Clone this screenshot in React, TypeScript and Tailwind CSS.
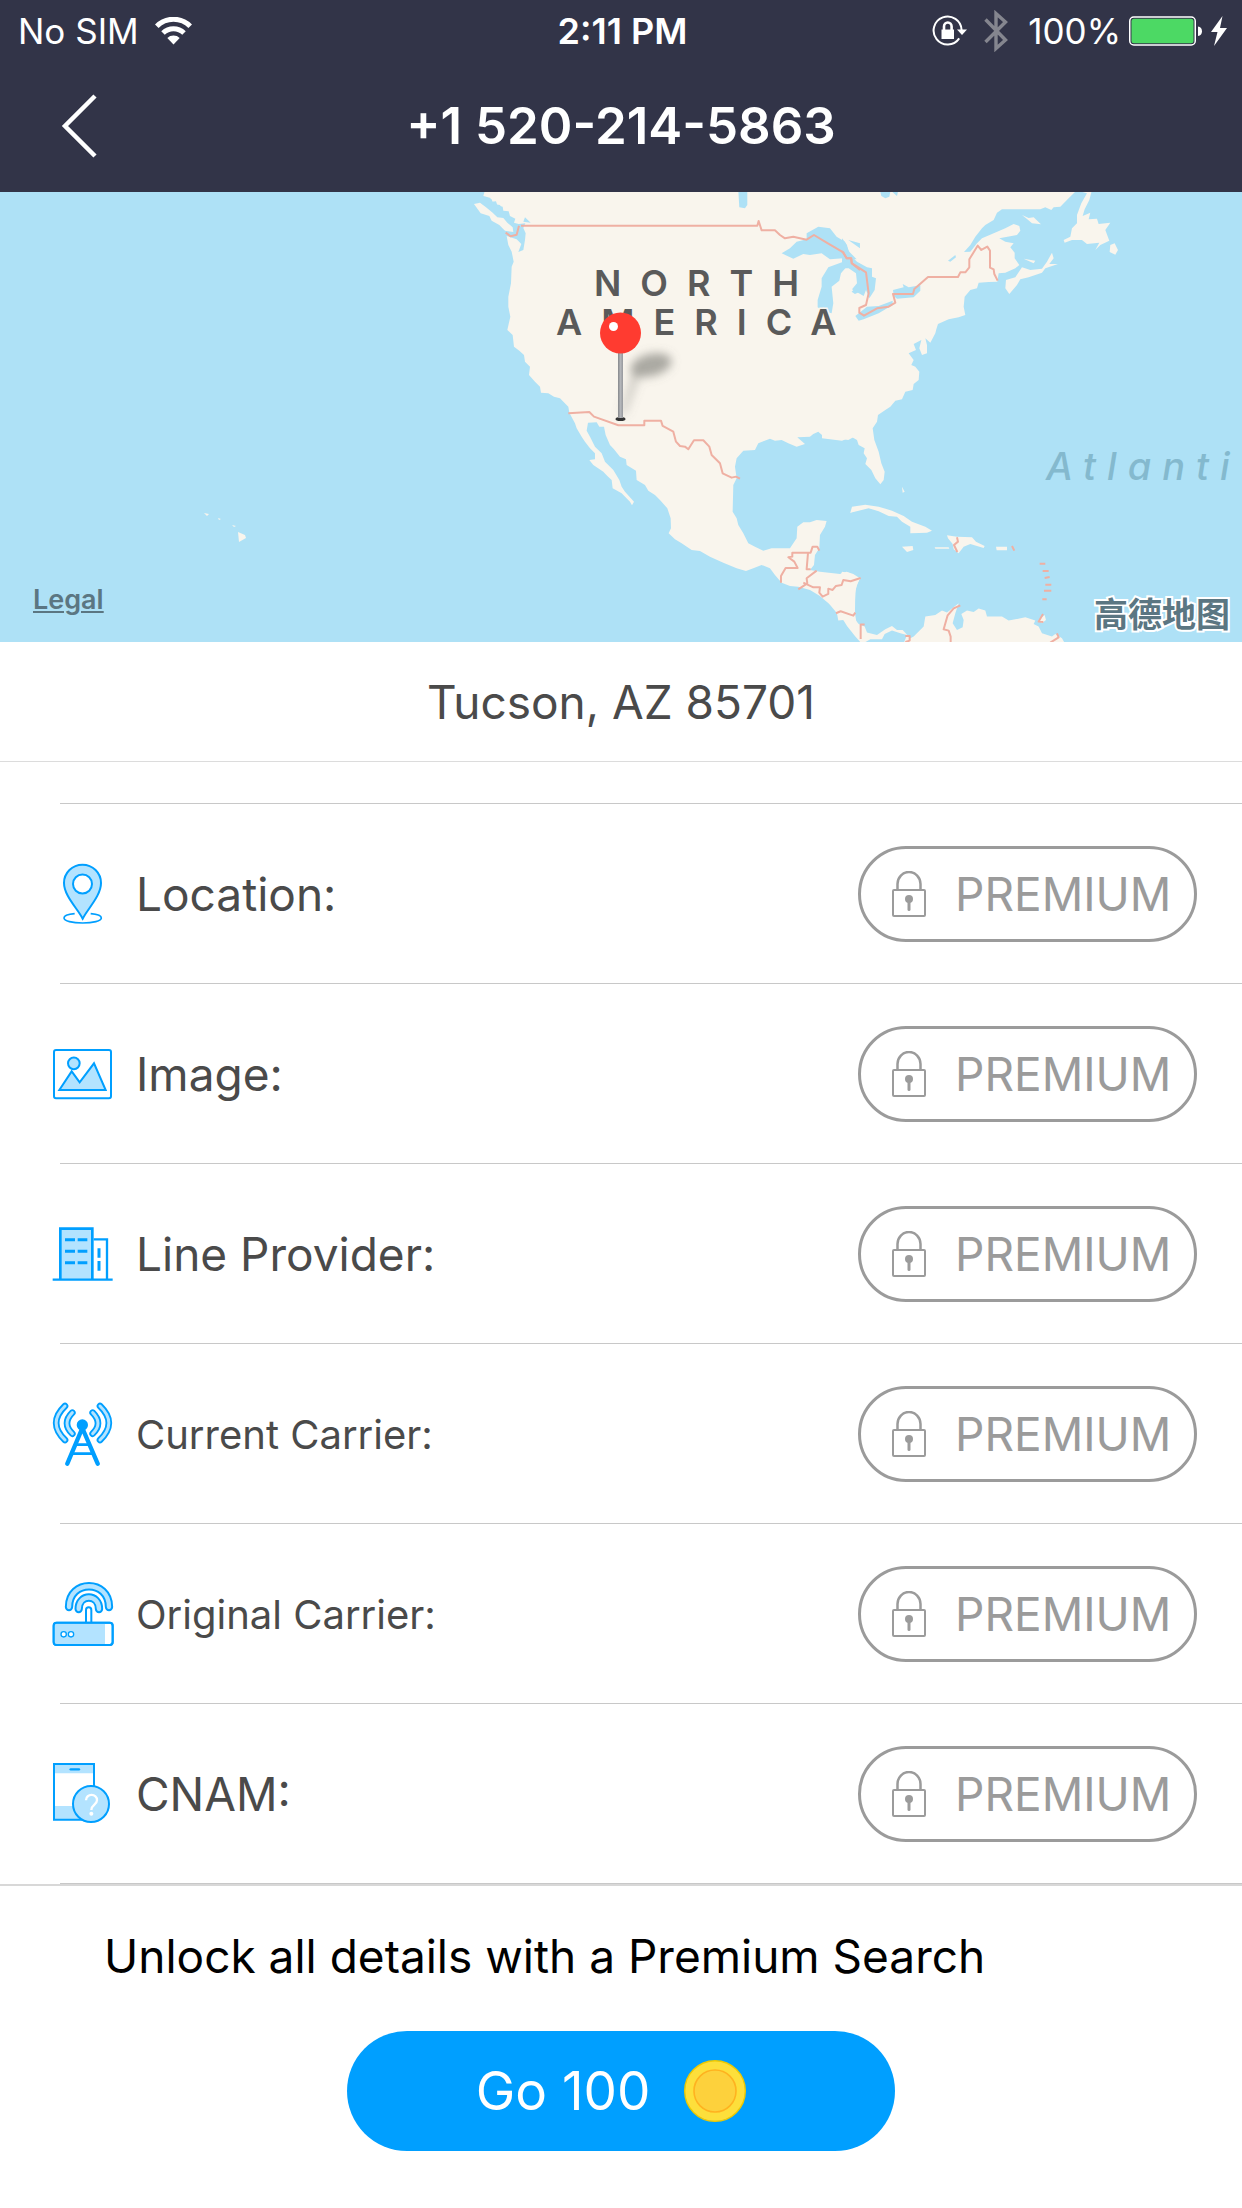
import type { ReactNode } from "react";

const BLUE = "#009fff";
const PALE = "#b3e3ff";

function WifiIcon() {
  return (
    <svg className="h-[28px] w-[37px]" viewBox="0 0 37 28" aria-hidden="true">
      <g fill="none" stroke="#fff" strokeWidth="5">
        <path d="M1.8 9.2a23.5 23.5 0 0 1 33.4 0" />
        <path d="M8 16a15 15 0 0 1 21 0" />
      </g>
      <path d="M18.5 27.5l-6.2-6.6a9 9 0 0 1 12.4 0z" fill="#fff" />
    </svg>
  );
}

function RotationLockIcon() {
  return (
    <svg className="h-[32px] w-[36px]" viewBox="0 0 36 32" aria-hidden="true">
      <path d="M27.2 23.4A14 14 0 1 1 29.6 15" fill="none" stroke="#fff" strokeWidth="2" />
      <path d="M25 14.6h10l-5 5.4z" fill="#fff" />
      <path d="M9.500 14.500h12.500v9.500H9.500z" fill="#fff" />
      <path d="M12 15.500V11.500a3.800 4 0 0 1 7.600 0v4" fill="none" stroke="#fff" strokeWidth="2.600" />
    </svg>
  );
}

function BluetoothIcon() {
  return (
    <svg className="h-[42px] w-[24px]" viewBox="0 0 24 42" aria-hidden="true">
      <path
        d="M1.500 9.500L21.500 30 12 38.500V3.500L21.500 12 1.500 32"
        fill="none"
        stroke="#85868f"
        strokeWidth="3.400"
      />
    </svg>
  );
}

function BatteryIcon() {
  return (
    <svg className="h-[30px] w-[74px]" viewBox="0 0 74 30" aria-hidden="true">
      <rect x="0.750" y="1" width="65.500" height="28" rx="4" fill="none" stroke="#fff" strokeWidth="1.500" />
      <rect x="2.500" y="2.700" width="62" height="24.600" rx="2.500" fill="#4cd964" />
      <path d="M69 10.500c5.300 0 5.300 9.500 0 9.500z" fill="#fff" />
    </svg>
  );
}

function BoltIcon() {
  return (
    <svg className="h-[30px] w-[16px]" viewBox="0 0 16 30" aria-hidden="true">
      <path d="M11.500 0L0 16h6.500L3 30 16 12H9z" fill="#fff" />
    </svg>
  );
}

function LockIcon() {
  return (
    <svg className="h-[46px] w-[34px]" viewBox="0 0 34 46" aria-hidden="true">
      <g fill="none" stroke="#9b9b9b" strokeWidth="2">
        <rect x="1" y="19" width="32" height="26" rx="1" />
        <path d="M5.500 19V13a11.500 12 0 0 1 23 0v6" strokeWidth="2.500" />
      </g>
      <circle cx="17" cy="28" r="4" fill="#9b9b9b" />
      <path d="M17 28v10.500" stroke="#9b9b9b" strokeWidth="3" strokeLinecap="round" />
    </svg>
  );
}

function RowIcon({ viewBox, children }: { viewBox: string; children: ReactNode }) {
  return (
    <svg
      className="h-[64px] w-[62px] shrink-0"
      viewBox={viewBox}
      fill="none"
      stroke={BLUE}
      strokeWidth="6"
      aria-hidden="true"
    >
      {children}
    </svg>
  );
}

const locationIcon = (
  <RowIcon viewBox="36 64 186 192">
    <path d="M104 219c-20 2-32 7-32 13 0 9 25 15 56 15s56-6 56-15c0-6-12-11-32-13" strokeWidth="5" />
    <path d="M128 234C112 203 72 165 72 127a55.500 55 0 0 1 111 0c0 38-39 76-55 107z" fill={PALE} />
    <circle cx="127.500" cy="130" r="28.500" fill="#fff" />
  </RowIcon>
);

const imageIcon = (
  <RowIcon viewBox="36 604 186 192">
    <rect x="42" y="628" width="171" height="145" rx="6" />
    <circle cx="101.500" cy="668" r="17.500" fill={PALE} />
    <path d="M58 748L95 692l24 33 43-57 35 80z" fill={PALE} />
  </RowIcon>
);

const buildingIcon = (
  <RowIcon viewBox="36 64 186 192">
    <path d="M61 236V84h96v152" fill={PALE} strokeWidth="8" />
    <path d="M161 116h40v120M38 237h180" strokeWidth="7" />
    <path d="M75 117h30m8 0h29M75 152h30m8 0h29M75 186h30m8 0h29M177 143v28m0 10v29" strokeWidth="9" />
  </RowIcon>
);

const waves = "M75 616q-53 51 0 102M97 636q-32 32 0 63";

const towerIcon = (
  <RowIcon viewBox="36 604 186 192">
    <g strokeLinecap="round">
      <path d={waves} strokeWidth="20" />
      <path d={waves} stroke={PALE} strokeWidth="9" />
      <g transform="matrix(-1 0 0 1 255 0)">
        <path d={waves} strokeWidth="20" />
        <path d={waves} stroke={PALE} strokeWidth="9" />
      </g>
      <path d="M127 682L82 789M127 682l46 107" strokeWidth="13" />
    </g>
    <path d="M110 732h34M98 759h58" strokeWidth="8" />
    <circle cx="127" cy="673" r="17" fill={BLUE} stroke="none" />
  </RowIcon>
);

const arcs = "M87 139C87 56 207 56 207 139M116 145c0-46 61-46 61 0";

const routerIcon = (
  <RowIcon viewBox="36 64 186 192">
    <path d={arcs} strokeWidth="25" strokeLinecap="round" />
    <path d={arcs} stroke={PALE} strokeWidth="13" strokeLinecap="round" />
    <path d="M138 185v-37c0-11 16-11 16 0v37" fill="#fff" />
    <rect x="41" y="186" width="177" height="67" rx="9" fill="#fff" />
    <path d="M44 189h151v61H44z" fill={PALE} stroke="none" />
    <rect x="41" y="186" width="177" height="67" rx="9" />
    <circle cx="71" cy="221" r="8" fill="#fff" strokeWidth="4" />
    <circle cx="93" cy="221" r="8" fill="#fff" strokeWidth="4" />
  </RowIcon>
);

const phoneIcon = (
  <RowIcon viewBox="36 604 186 192">
    <path d="M42 610h120v28H42zM42 736h120v41H42z" fill={PALE} stroke="none" />
    <path d="M162 690v-80H42v167h90" />
    <path d="M92 626h25" strokeWidth="7" strokeLinecap="round" />
    <circle cx="153" cy="730" r="54" fill={PALE} />
    <path d="M138 719c0-22 34-21 33 0 0 13-17 13-17 29" stroke="#fff" strokeWidth="7" />
    <circle cx="154" cy="759" r="6" fill="#fff" stroke="none" />
  </RowIcon>
);

const rows = [
  { label: "Location:", icon: locationIcon, small: false },
  { label: "Image:", icon: imageIcon, small: false },
  { label: "Line Provider:", icon: buildingIcon, small: false },
  { label: "Current Carrier:", icon: towerIcon, small: true },
  { label: "Original Carrier:", icon: routerIcon, small: true },
  { label: "CNAM:", icon: phoneIcon, small: false },
];

const WEST_LAND =
  "M75 0 70 18 92 24 88 36 108 34 112 46 128 50 130 62 146 64 150 78 166 86 162 98 176 102 196 100 190 114 197 130 195 150 190 180 175 186 184 162 170 148 140 138 145 165 155 185 161 215 155 230 153 280 145 320 145 350 151 380 142 420 158 435 162 470 178 482 192 495 195 515 210 530 207 555 225 575 240 590 243 608 265 610 282 620 300 625 325 650 328 668 345 700 350 715 365 740 375 755 390 775 405 790 405 808 388 810 400 825 430 845 442 858 455 870 458 895 485 910 510 935 516 946 522 935 495 905 485 890 478 870 460 840 435 815 425 790 405 770 390 740 380 722 384 698 410 697 418 710 432 710 437 735 450 765 462 778 480 800 498 808 500 825 528 842 530 870 555 885 565 902 585 915 600 930 622 955 632 985 633 1015 626 1030 645 1048 665 1060 695 1080 720 1083 750 1100 790 1118 830 1135 858 1143 880 1135 905 1125 930 1135 945 1155 965 1178 990 1188 1015 1190 1050 1200 1080 1218 1100 1235 1125 1255 1132 1275 1135 1292 1150 1290 1165 1300 1180 1320 1200 1335 1206 1335 1190 1300 1185 1270 1186 1200 1195 1175 1200 1165 1180 1152 1160 1145 1140 1152 1120 1150 1080 1145 1050 1140 1062 1125 1065 1095 1078 1075 1080 1035 1095 1010 1100 993 1070 990 1050 997 1030 997 1012 1010 1010 1045 990 1075 960 1075 935 1075 910 1082 885 1070 865 1060 850 1030 835 1005 830 985 818 965 820 885 830 865 825 830 830 805 850 782 885 780 895 760 930 746 945 752 965 750 985 760 1010 770 1035 762 1012 742 1050 740 1060 732 1075 725 1085 734 1110 732 1140 735 1148 748 1165 750 1180 742 1200 752V0Z";

const EAST_LAND =
  "M-60 0H705L680 25 655 50 635 52 628 60 610 52 595 58 480 58 465 68 455 90 430 105 420 115 400 140 385 165 366 186 385 185 405 160 420 145 450 132 490 115 515 102 532 108 535 122 525 135 472 145 490 155 515 160 505 172 518 188 518 205 532 225 520 235 490 248 470 250 466 275 440 276 410 278 405 295 385 300 368 320 365 350 370 375 350 382 320 388 288 402 283 418 280 430 265 458 250 445 255 465 255 490 240 495 232 475 238 450 215 462 222 480 200 490 215 510 208 525 220 530 232 545 230 570 215 582 212 600 190 605 180 628 160 632 145 650 130 660 108 675 105 695 92 715 97 750 110 785 118 820 128 845 125 870 115 883 100 865 88 840 70 822 75 805 65 790 68 775 50 765 45 750 28 740 0 752-60 745Z";

const SOUTH_LAND =
  "M4 1290-15 1270-40 1240 0 1145 20 1148 30 1162 54 1166 44 1185 40 1210 38 1250 32 1280 50 1302 68 1310 75 1328 105 1335 130 1318 150 1308 165 1320 182 1320 205 1345 215 1340 245 1310 250 1280 280 1275 300 1262 315 1268 350 1240 340 1270 332 1300 345 1320 362 1312 365 1290 358 1272 375 1262 395 1266 410 1256 430 1262 435 1280 480 1280 500 1292 550 1282 580 1292 575 1302 590 1310 600 1330 630 1340 640 1332 660 1345 680 1380 190 1380 185 1360 195 1335 175 1330 150 1322 128 1332 120 1348 85 1348 60 1362 40 1340 15 1308Z";

const ISLANDS =
  "M700 0H750L742 30 728 58 722 78 745 68 740 88 765 86 770 102 805 98 790 120 802 152 775 165 760 180 772 158 735 162 720 150 690 150 668 158 665 150 685 140 690 115 705 100 705 75 718 40 735 10ZM805 165 818 160 828 180 820 194 803 186ZM540 75 560 84 575 82 597 103 570 100 556 88ZM545 206 580 212 575 220ZM630 188 635 205 622 222 648 222 610 235 600 248 560 262 535 268 525 285 502 312 490 295 492 270 520 262 540 232 565 240 600 236 615 215ZM25 968 30 950 70 944 110 950 150 962 185 978 210 995 250 1010 270 1022 255 1028 205 1030 205 1010 180 995 165 980 140 978 110 964 80 955 50 962ZM180 1070 212 1068 214 1080 195 1086ZM318 1045 315 1036 345 1040 390 1042 402 1055 428 1068 425 1074 385 1062 365 1070 350 1090 335 1078 332 1062ZM278 1072 320 1072 322 1076 280 1076ZM462 1070H495V1081H464ZM590 1290 608 1275 612 1290 600 1300ZM180 890 188 905 182 908Z";

const EAST_LAKES =
  "M0 145 15 165 20 190 45 215 75 232 90 235 90 260 102 265 98 300 82 325 72 300 65 318 30 298 45 280 42 250 20 235 0 235ZM40 378 75 350 110 348 152 332 152 345 110 370 65 388 50 392ZM153 300 185 292 182 282 200 292 235 286 235 302 215 322 165 326 155 318ZM115 5H145L142 20 130 25 118 18ZM150 5H168L165 18ZM318 212 340 195 342 202 325 215Z";

const WEST_LAKES =
  "M835 0H862V45L855 55 838 52ZM965 190 990 175 1010 155 1040 148 1040 130 1075 110 1110 115 1130 140 1155 155 1168 185 1190 208 1150 205 1110 208 1085 190 1050 195 1030 192 1000 206ZM1073 330 1085 290 1085 265 1105 232 1150 215 1200 220 1185 232 1160 230 1143 250 1138 272 1115 290 1120 340 1115 370 1095 365 1073 352ZM1175 305 1200 280V305L1185 312ZM190 95 195 82 212 98ZM75 20 95 28 100 42 120 45 126 56 108 52 90 42ZM1200 175 1165 150 1200 160Z";

function MapDrawing() {
  return (
    <svg
      className="block h-full w-full"
      viewBox="0 192 1242 450"
      preserveAspectRatio="xMidYMid slice"
      role="img"
      aria-label="Map of North America"
    >
      <defs>
        <filter id="shade" x="-50%" y="-80%" width="200%" height="260%">
          <feGaussianBlur stdDeviation="5" />
        </filter>
        <linearGradient id="needle">
          <stop offset="0" stopColor="#85878a" />
          <stop offset="0.500" stopColor="#b3b5b9" />
          <stop offset="1" stopColor="#96989c" />
        </linearGradient>
      </defs>
      <rect y="192" width="1242" height="450" fill="#aee1f6" />
      <g transform="translate(460 190) scale(0.3333)" strokeLinejoin="round">
        <path d={WEST_LAND} fill="#f9f5ed" />
        <path d="M42 42 60 38 78 52 98 68 112 82 130 84 142 98 158 112 160 126 135 122 118 105 95 92 88 78 62 70Z" fill="#f9f5ed" />
        <path d="M1170 968 1185 955 1200 950V958Z" fill="#f9f5ed" />
      </g>
      <g transform="translate(842 190) scale(0.3333)" fill="#f9f5ed">
        <path d={EAST_LAND} />
        <path d={SOUTH_LAND} />
        <path d={ISLANDS} />
        <path d={EAST_LAKES} fill="#aee1f6" />
      </g>
      <g transform="translate(460 190) scale(0.3333)" fill="none" strokeLinejoin="round">
        <path d={WEST_LAKES} fill="#aee1f6" />
        <g stroke="#efb0a3" strokeWidth="6">
          <path d="M137 128 152 139 170 134 177 107M183 107H892L896 93 905 121H945L960 135 975 145 1000 140 1040 149 1062 135 1100 158 1150 187 1160 205H1173L1175 220 1200 240" />
          <path d="M325 670 388 666 402 680 475 706H553V692H603L608 708 640 725 648 755 660 768 675 770 685 778 702 751H730L748 770 755 795 780 820 788 850 815 863 828 860 840 866" />
          <path d="M963 1178V1158L977 1134H1013L1003 1115 985 1102 997 1100V1088H1052L1058 1070H1072L1078 1082M1044 1090 1040 1138H1052M1070 1142 1040 1165 1042 1180 1015 1198M1030 1178 1060 1192H1080L1078 1208 1088 1220 1105 1212V1196L1118 1200 1128 1188 1145 1185 1150 1170 1172 1174 1202 1164M1128 1270 1142 1264 1180 1277 1186 1268" />
        </g>
      </g>
      <g transform="translate(842 190) scale(0.3333)" fill="none" stroke="#efb0a3" strokeWidth="6" strokeLinejoin="round">
        <path d="M0 183 14 205H28L30 220 72 247 80 310 72 345 52 354V368L66 377 105 355 140 350 160 338 153 312H213L217 297 258 261H348L355 247H370L382 232V208L407 167 418 180 436 170 444 182V233L455 238 457 252 467 272" />
        <path d="M345 1042 348 1055 336 1065 346 1086M510 1068 517 1082M593 1121H610M602 1143H620M608 1164 623 1161M610 1184H628M606 1202H628M601 1228H614M603 1272 590 1295 604 1296M355 1246 335 1255 317 1276 305 1318 320 1322 326 1340V1360M68 1304H56V1347M190 1338H203V1352L190 1356M645 1330 650 1342 625 1358" />
      </g>
      <path d="M204 513l5 1-2 2zM218 518l3 1-2 1zM232 525l4 1-2 1zM238 532l7 3 1 3-7 4z" fill="#f9f5ed" />
      <g
        className="text-[36px] font-semibold tracking-[19px]"
        fill="#5a5a5a"
        stroke="#f9f5ed"
        strokeWidth="3"
        style={{ paintOrder: "stroke" }}
      >
        <text x="594" y="296">NORTH</text>
        <text x="556" y="335">AMERICA</text>
      </g>
      <text x="1046" y="480" className="text-[38px] font-medium italic tracking-[11px]" fill="#84b9ce">
        Atlanti
      </text>
      <g filter="url(#shade)">
        <ellipse cx="651" cy="365" rx="21" ry="11" fill="#77766f" opacity="0.600" transform="rotate(-14 651 365)" />
        <path d="M632 372h10l-16 42h-6z" fill="#77766f" opacity="0.300" />
      </g>
      <ellipse cx="620.500" cy="419" rx="5" ry="2" fill="#333" />
      <path d="M618 350h5v68h-5z" fill="url(#needle)" />
      <circle cx="620.500" cy="333" r="20.500" fill="#ff3b30" />
      <circle cx="613.500" cy="326.500" r="4.500" fill="#fff" />
    </svg>
  );
}

export default function App() {
  return (
    <div className="flex min-h-screen flex-col bg-white font-['Inter','Noto_Sans_CJK_SC',sans-serif]">
      <header className="bg-[#323448] text-white">
        <div className="grid h-[60px] grid-cols-[1fr_auto_1fr] items-center pr-[15px] pl-[18px] text-[35px] leading-[62px]">
          <div className="flex items-center gap-4">
            <span>No SIM</span>
            <WifiIcon />
          </div>
          <time className="text-[36px] font-semibold">2:11 PM</time>
          <div className="flex items-center justify-end">
            <RotationLockIcon />
            <span className="ml-4 flex">
              <BluetoothIcon />
            </span>
            <span className="mr-2 ml-5">100%</span>
            <BatteryIcon />
            <span className="ml-2 flex">
              <BoltIcon />
            </span>
          </div>
        </div>
        <div className="grid h-[132px] grid-cols-[1fr_auto_1fr] items-center">
          <button type="button" aria-label="Back" className="ml-[60px] flex w-[40px] cursor-pointer">
            <svg className="h-[64px] w-[40px]" viewBox="0 0 40 64" aria-hidden="true">
              <path d="M35 2L5 32l30 30" fill="none" stroke="#fff" strokeWidth="4.500" />
            </svg>
          </button>
          <h1 className="text-[51px] leading-[60px] font-semibold">+1 520-214-5863</h1>
        </div>
      </header>

      <section className="relative h-[450px] overflow-hidden">
        <MapDrawing />
        <a
          href="#legal"
          className="absolute bottom-[24px] left-[33px] text-[27px] leading-[36px] font-semibold text-[#5b7682] underline decoration-2 underline-offset-2"
        >
          Legal
        </a>
        <span
          className="absolute right-[12px] bottom-[9px] text-[34px] leading-[36px] font-bold text-[#5b7682] [-webkit-text-stroke:4px_white] [paint-order:stroke_fill]"
          lang="zh-CN"
        >
          高德地图
        </span>
      </section>

      <p className="h-[120px] border-b border-[#dcdcdc] text-center text-[46px] leading-[120px] text-[#4a4a4a]">
        Tucson, AZ 85701
      </p>

      <ul className="mt-[41px]">
        {rows.map((row) => (
          <li key={row.label} className="ml-[60px] border-t border-[#c8c8c8] last:border-b">
            <div className="-ml-2 flex h-[179px] items-center pr-[45px]">
              {row.icon}
              <span className="ml-[22px] text-[46px] leading-[60px] text-[#4a4a4a]">
                {row.small ? <span className="text-[40px]">{row.label}</span> : row.label}
              </span>
              <button
                type="button"
                aria-label={`Unlock ${row.label.replace(":", "")} with Premium`}
                className="ml-auto flex h-[96px] w-[339px] cursor-pointer items-center rounded-full border-[3px] border-[#9b9b9b] pl-[31px] text-[46px] leading-[60px] text-[#9b9b9b]"
              >
                <LockIcon />
                <span className="ml-[29px]">PREMIUM</span>
              </button>
            </div>
          </li>
        ))}
      </ul>

      <footer className="flex flex-col border-t-2 border-[#d8d8d8]">
        <p className="px-[104px] pt-[40px] text-[46px] leading-[60px] text-black">
          Unlock all details with a Premium Search
        </p>
        <button
          type="button"
          className="mt-[45px] flex h-[120px] w-[548px] cursor-pointer items-center justify-center gap-[34px] self-center rounded-full bg-[#009fff] pr-5 text-[53px] leading-[64px] text-white"
        >
          <span>Go 100</span>
          <svg className="h-[62px] w-[62px]" viewBox="0 0 62 62" aria-hidden="true">
            <circle cx="31" cy="31" r="30.300" fill="#fddf3b" stroke="#eec900" strokeWidth="1.400" />
            <circle cx="31" cy="31" r="21" fill="#fdd13c" stroke="#ffb21f" strokeWidth="1.600" />
          </svg>
        </button>
      </footer>
    </div>
  );
}
